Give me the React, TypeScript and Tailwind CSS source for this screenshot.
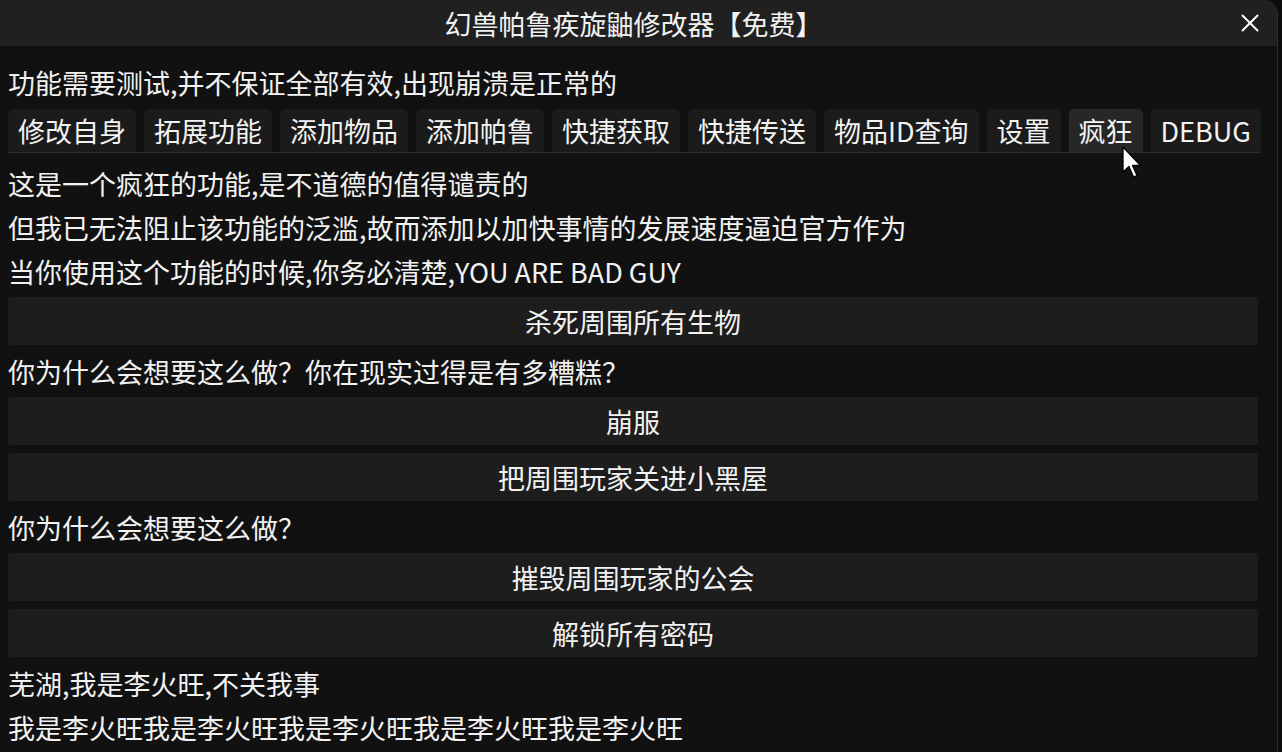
import { X } from "lucide-react";

type Item = { kind: "text" | "button"; label: string };

const tabs = ["修改自身", "拓展功能", "添加物品", "添加帕鲁", "快捷获取", "快捷传送", "物品ID查询", "设置", "疯狂", "DEBUG"];

const items: Item[] = [
    { kind: "text", label: "这是一个疯狂的功能,是不道德的值得谴责的" },
    { kind: "text", label: "但我已无法阻止该功能的泛滥,故而添加以加快事情的发展速度逼迫官方作为" },
    { kind: "text", label: "当你使用这个功能的时候,你务必清楚,YOU ARE BAD GUY" },
    { kind: "button", label: "杀死周围所有生物" },
    { kind: "text", label: "你为什么会想要这么做？你在现实过得是有多糟糕？" },
    { kind: "button", label: "崩服" },
    { kind: "button", label: "把周围玩家关进小黑屋" },
    { kind: "text", label: "你为什么会想要这么做？" },
    { kind: "button", label: "摧毁周围玩家的公会" },
    { kind: "button", label: "解锁所有密码" },
    { kind: "text", label: "芜湖,我是李火旺,不关我事" },
    { kind: "text", label: "我是李火旺我是李火旺我是李火旺我是李火旺我是李火旺" },
];

function Pointer() {
    return (
        <svg width="22" height="34" viewBox="0 0 22 34" className="absolute left-[1122px] top-[146px] pointer-events-none">
            <path d="M1 1 L1 26 L7 20.5 L11.5 31 L15 29.5 L10.5 19.5 L18.5 19.5 Z" fill="#fff" stroke="#000" strokeWidth="1.3" strokeLinejoin="round" />
        </svg>
    );
}

export default function App() {
    const active = "疯狂";

    return (
        <div className="relative min-h-screen bg-[#0c0c0c] text-[#f2f2f2] font-['Noto_Sans_CJK_SC','Noto_Sans',sans-serif] text-[27px]">
            <div className="w-[1278px] h-[752px] flex flex-col bg-[#111111] rounded-tr-[14px] border-r border-[#2e2e2e] overflow-hidden">
                {/* title bar */}
                <div className="relative h-[46px] shrink-0 bg-[#202020] flex items-center justify-center">
                    <span className="leading-none text-[27px] -ml-[10px] whitespace-nowrap">幻兽帕鲁疾旋鼬修改器【免费】</span>
                    <button className="absolute right-[12px] top-[8px] w-[30px] h-[30px] flex items-center justify-center text-white">
                        <X size={30} strokeWidth={1.5} />
                    </button>
                </div>

                <div className="px-2 flex flex-col">
                    <div className="h-[63px] pt-[9px] flex items-center leading-none whitespace-nowrap">
                        功能需要测试,并不保证全部有效,出现崩溃是正常的
                    </div>

                    {/* tab strip */}
                    <div className="flex gap-[8px] border-b border-[#2c2c2c] h-[44px] mr-[8px]">
                        {tabs.map((t) => (
                            <div
                                key={t}
                                className={`shrink-0 whitespace-nowrap h-[43px] px-[10px] flex items-center rounded-t-[5px] leading-none ${
                                    t === active ? "bg-[#272727]" : "bg-[#1b1b1b]"
                                }`}
                            >
                                {t}
                            </div>
                        ))}
                    </div>

                    <div className="pt-[8px] flex flex-col">
                        {items.map((it, i) =>
                            it.kind === "text" ? (
                                <div key={i} className="h-[44px] flex items-center leading-none whitespace-nowrap">
                                    {it.label}
                                </div>
                            ) : (
                                <button
                                    key={i}
                                    className="h-[48px] my-[4px] w-[1250px] bg-[#1d1d1d] rounded-[3px] flex items-center justify-center leading-none"
                                >
                                    {it.label}
                                </button>
                            )
                        )}
                    </div>
                </div>
            </div>
            <Pointer />
        </div>
    );
}
